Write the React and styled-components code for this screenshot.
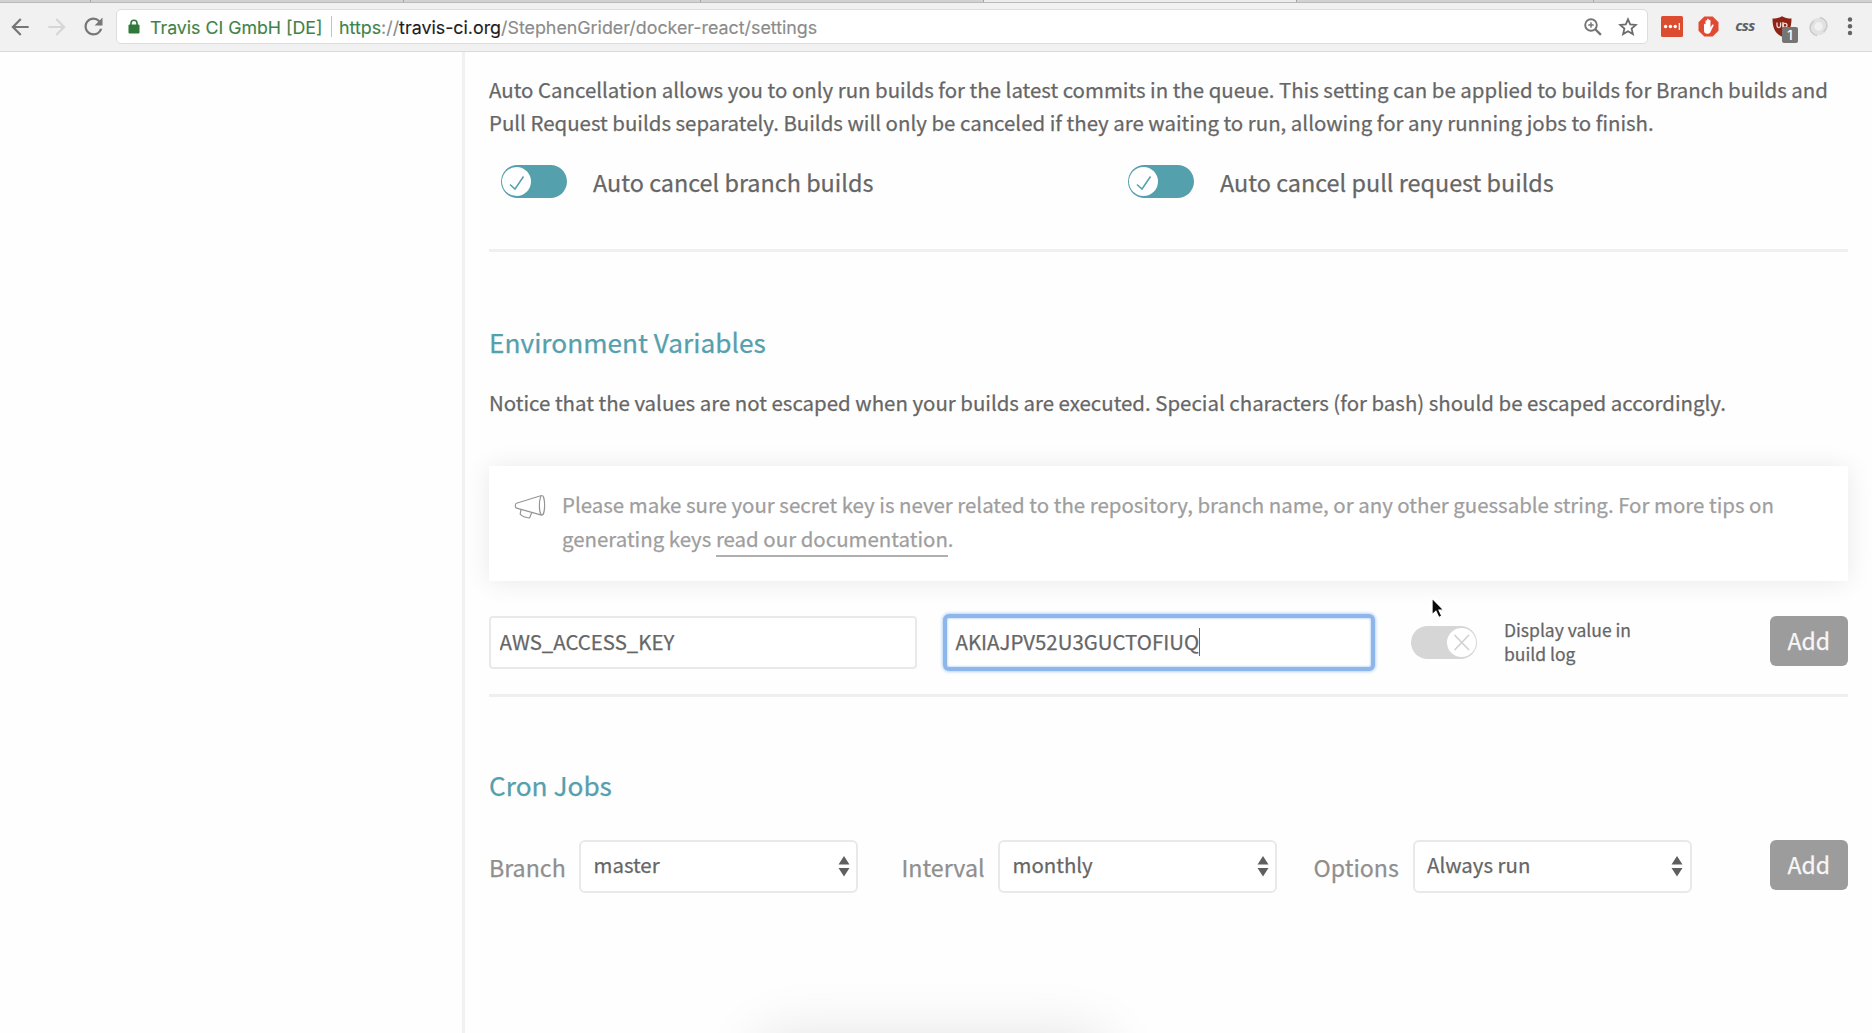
import React from 'react';
import styled, { createGlobalStyle, css } from 'styled-components';

const teal = '#55a0ad';
const textFont = '"Noto Sans CJK SC", "Open Sans", sans-serif';
const chromeFont = 'Inter, Roboto, sans-serif';

const Global = createGlobalStyle`
  * { box-sizing: border-box; }
  body { margin: 0; background: #fefefe; overflow: hidden; font-family: ${textFont}; color: #666; }
`;

const Window = styled.div`
  position: relative;
  display: flex;
  flex-direction: column;
  height: 1033px;
  width: 1872px;
  overflow: hidden;
`;

/* ---------- browser chrome ---------- */
const TabStrip = styled.div`
  display: flex;
  height: 3px;
  background: #d2d2d2;
  border-bottom: 1px solid #b9b9b9;
`;
const Tab = styled.div`
  width: ${p => p.$width}px;
  border-right: 1px solid #a5a5a5;
  background: ${p => (p.$active ? '#ececec' : 'transparent')};
`;
const Toolbar = styled.div`
  display: flex;
  align-items: center;
  height: 49px;
  padding: 0 0 1px 5px;
  background: #f1f1f1;
  border-bottom: 1px solid #dadada;
`;
const NavButton = styled.span`
  display: flex;
  flex: none;
  justify-content: center;
  width: 37px;
  margin-left: ${p => (p.$first ? -4 : 0)}px;
  color: ${p => (p.$disabled ? '#d6d6d6' : '#777')};
  &:nth-child(3) { margin-right: 4px; }
`;
const AddressBar = styled.div`
  display: flex;
  align-items: center;
  flex: none;
  width: 1532px;
  height: 35px;
  padding: 0 9px 0 11px;
  background: #fff;
  border: 1px solid #dcdcdc;
  border-radius: 5px;
  font: 17.75px/33px ${chromeFont};
  color: #8b8b8b;
  white-space: pre;
`;
const Secure = styled.span`
  margin-left: 10px;
  padding-top: 1px;
  color: #3f8347;
  -webkit-text-stroke: 0.15px currentColor;
`;
const Separator = styled.span`
  width: 1px;
  height: 21px;
  margin: 0 7px 0 8.5px;
  background: #c4c4c4;
`;
const Url = styled.span`
  flex: 1;
  padding-top: 1px;
  font-size: 17.83px;
  -webkit-text-stroke: 0.15px currentColor;
`;
const Scheme = styled.span`color: #3f8347;`;
const Host = styled.span`color: #1c1c1c;`;
const BarIcons = styled.span`
  display: flex;
  align-items: center;
  gap: 16px;
`;
const Extensions = styled.div`
  display: flex;
  align-items: center;
  flex: 1;
  margin-left: 13px;
`;
const Slot = styled.span`
  position: relative;
  display: flex;
  flex: none;
  justify-content: center;
  width: ${p => p.$width}px;
  height: 21px;
  svg { flex: none; }
`;
const CssMark = styled.span`
  font: italic 700 15px/19px "Open Sans", sans-serif;
  letter-spacing: -0.7px;
  color: #616161;
`;
const Badge = styled.span`
  position: absolute;
  left: 26px;
  top: 11px;
  width: 16px;
  height: 16px;
  border-radius: 2px;
  background: #757575;
  color: #fff;
  font: 500 13px/16px ${chromeFont};
  text-align: center;
`;

/* ---------- page ---------- */
const Page = styled.div`
  display: flex;
  flex: 1;
  -webkit-text-stroke: 0.25px currentColor;
`;
const Sidebar = styled.aside`
  width: 465px;
  border-right: 3px solid #f1f1f1;
`;
const Content = styled.main`
  flex: 1;
  padding: 21px 24px 0;
`;
const Paragraph = styled.p`
  margin: 0;
  font-size: 20.43px;
  line-height: 33px;
  white-space: nowrap;
`;
const Section = styled.section`
  padding-top: ${p => p.$top || 0}px;
  ${p => p.$height && css`
    height: ${p.$height}px;
    border-bottom: 3px solid #efefef;
  `}
`;
const Heading = styled.h2`
  margin: 0 0 ${p => p.$gap}px;
  font-size: 26.25px;
  font-weight: 400;
  line-height: 39px;
  color: ${teal};
`;
const SwitchRow = styled.div`
  display: grid;
  grid-template-columns: 627px 1fr;
  padding: 25px 0 0 11.5px;
`;
const SwitchItem = styled.div`
  display: flex;
  align-items: center;
  gap: 26.5px;
`;
const SwitchLabel = styled.span`
  padding-top: 2px;
  font-size: 23.4px;
  line-height: 33px;
`;
const Track = styled.span`
  display: flex;
  justify-content: ${p => (p.$on ? 'flex-start' : 'flex-end')};
  flex: none;
  width: 66px;
  height: 33px;
  padding: 2px 1.5px;
  border-radius: 17px;
  background: ${p => (p.$on ? teal : '#d6d6d6')};
`;
const Knob = styled.span`
  width: 29px;
  height: 29px;
  border-radius: 50%;
  background: #fff;
  svg { display: block; }
`;
const Notice = styled.div`
  display: flex;
  height: 115px;
  margin: 47px 0 35px;
  padding: 21px 25px;
  background: #fff;
  box-shadow: 0 1px 24px rgba(0, 0, 0, 0.085);
  color: #9e9e9e;
  font-size: 20.44px;
  line-height: 34px;
  white-space: nowrap;
`;
const NoticeIcon = styled.span`
  width: 48px;
  padding-top: 7px;
  svg { display: block; }
`;
const DocLink = styled.a`
  padding-bottom: 2px;
  border-bottom: 2px solid #b0b0b0;
`;
const FormRow = styled.div`
  display: flex;
  align-items: center;
  height: 53px;
`;
const fieldBase = css`
  width: 428px;
  height: 53px;
  padding: 0 0 3px 8.5px;
  border: 2px solid #e9e9e9;
  border-radius: 4px;
  background: #fff;
  color: #666;
  font: 20.42px/46px ${textFont};
  outline: none;
`;
const Field = styled.input`
  ${fieldBase}
  margin-right: 28px;
`;
const FocusedField = styled.div`
  ${fieldBase}
  display: flex;
  align-items: center;
  border-color: #8db6ec;
  box-shadow: 0 0 0 2px #8db6ec, 0 0 3px 3px #b9d4f6, inset 0 0 2px 1px #cfe1f8;
  margin-right: 38px;
`;
const Caret = styled.span`
  width: 1px;
  height: 28px;
  margin-top: 2px;
  background: #666;
`;
const LogLabel = styled.span`
  width: 160px;
  margin-left: 27px;
  padding-bottom: 2px;
  font-size: 17.5px;
  line-height: 23.5px;
`;
const AddButton = styled.button`
  width: 78.5px;
  height: 50px;
  margin-left: auto;
  padding: 0 0 3px;
  align-self: flex-start;
  border: 0;
  border-radius: 6px;
  background: #9c9c9c;
  color: #f7f7f7;
  font: 23px/46px ${textFont};
`;
const SelectLabel = styled.label`
  width: ${p => p.$width}px;
  padding-top: 1px;
  font-size: 23.2px;
  line-height: 34px;
  color: #8f8f8f;
`;
const SelectBox = styled.span`
  position: relative;
  display: flex;
  width: 279px;
  height: 53px;
  margin-right: ${p => p.$gap}px;
`;
const Select = styled.select`
  appearance: none;
  width: 100%;
  padding: 0 30px 4px 12.5px;
  border: 2px solid #e9e9e9;
  border-radius: 6px;
  background: #fff;
  color: #666;
  font: 20.42px/45px ${textFont};
`;
const Arrows = styled.svg`
  position: absolute;
  right: 8.5px;
  top: 15px;
`;
const Pointer = styled.svg`
  position: absolute;
  left: 1430px;
  top: 596px;
`;
const BottomGlow = styled.div`
  position: absolute;
  left: 768px;
  top: 1045px;
  width: 330px;
  height: 60px;
  border-radius: 10px;
  box-shadow: 0 0 60px 10px rgba(0, 0, 0, 0.11);
`;

const Glyph = ({ d, size = 26, flip }) => (
  <svg width={size} height={size} viewBox="0 0 24 24" fill="currentColor">
    <path d={d} transform={flip ? 'translate(24 0) scale(-1 1)' : undefined} />
  </svg>
);
const arrowPath = 'M20 11H7.83l5.59-5.59L12 4l-8 8 8 8 1.41-1.41L7.83 13H20v-2z';
const reloadPath = 'M17.65 6.35A7.958 7.958 0 0 0 12 4c-4.42 0-7.99 3.58-7.99 8s3.57 8 7.99 8c3.73 0 6.84-2.55 7.73-6h-2.08A5.99 5.99 0 0 1 12 18c-3.31 0-6-2.69-6-6s2.69-6 6-6c1.66 0 3.14.69 4.22 1.78L13 11h7V4l-2.35 2.35z';

const Switch = ({ on }) => (
  <Track $on={on}>
    <Knob>
      <svg width="29" height="29" viewBox="0 0 29 29" fill="none" strokeWidth="1.5" stroke={on ? teal : '#cfcfcf'}>
        <path d={on ? 'M8 17.5l5 4.5 8.5-12.5' : 'M7.5 7l14.5 15M22 7L7.500 22'} />
      </svg>
    </Knob>
  </Track>
);

const Dropdown = ({ value, gap }) => (
  <SelectBox $gap={gap}>
    <Select defaultValue={value}><option>{value}</option></Select>
    <Arrows width="12" height="22" viewBox="0 0 12 22" fill="#5f5f5f">
      <path d="M6 1l5.500 8.500H.5zM6 21.500L.5 13h11z" />
    </Arrows>
  </SelectBox>
);

const tabs = [91, 313, 297, 283, 313, 297];

export default function App() {
  return (
    <Window>
      <Global />
      <TabStrip>
        {tabs.map((w, i) => <Tab key={i} $width={w} $active={i === 4} />)}
      </TabStrip>
      <Toolbar>
        <NavButton $first><Glyph d={arrowPath} /></NavButton>
        <NavButton $disabled><Glyph d={arrowPath} flip /></NavButton>
        <NavButton><Glyph d={reloadPath} size={27} /></NavButton>
        <AddressBar>
          <svg width="12" height="15" viewBox="0 0 12 15">
            <path d="M3 7V4.200a3 3 0 0 1 6 0V7" fill="none" stroke="#2f7a3a" strokeWidth="1.600" />
            <rect x="0.500" y="5.500" width="11" height="9" rx="1" fill="#2f7a3a" />
          </svg>
          <Secure>Travis CI GmbH [DE]</Secure>
          <Separator />
          <Url><Scheme>https</Scheme>://<Host>travis-ci.org</Host>/StephenGrider/docker-react/settings</Url>
          <BarIcons>
            <svg width="18" height="18" viewBox="0 0 18 18" fill="none" stroke="#737373" strokeWidth="1.900">
              <circle cx="7" cy="7" r="5.800" />
              <path d="M11.300 11.300l5.600 5.600" strokeWidth="2.300" />
              <path d="M4.300 7h5.400M7 4.300v5.400" strokeWidth="1.400" />
            </svg>
            <svg width="20" height="19" viewBox="0 0 20 19" fill="none" stroke="#6c6c6c" strokeWidth="1.800">
              <path d="M10 2.300l2.200 5.100 5.600.5-4.200 3.700 1.300 5.500-4.900-2.900-4.900 2.900 1.300-5.500L2.200 7.900l5.600-.5z" />
            </svg>
          </BarIcons>
        </AddressBar>
        <Extensions>
          <Slot $width={22}>
            <svg width="22" height="21" viewBox="0 0 22 21">
              <rect width="22" height="21" rx="1.500" fill="#db4c30" />
              <circle cx="4.600" cy="10.500" r="1.700" fill="#fff" />
              <circle cx="9.400" cy="10.500" r="1.700" fill="#fff" />
              <circle cx="14.200" cy="10.500" r="1.700" fill="#fff" />
              <path d="M18.300 7v7" stroke="#fff" strokeWidth="1.200" />
            </svg>
          </Slot>
          <Slot $width={51}>
            <svg width="21" height="21" viewBox="0 0 21 21">
              <path d="M6.300.5h8.400l5.800 5.800v8.400l-5.800 5.800H6.300L.5 14.700V6.300z" fill="#e04a32" />
              <path d="M6 8.500c0-1 1.500-1 1.500 0V5c0-1 1.600-1 1.600 0V3.600c0-1 1.700-1 1.700 0v1c0-1 1.700-1 1.700 0v6.600l1.600-2.300c.7-.8 1.900-.2 1.500.7l-3 6.200c-.6 1.400-1.600 2-3.300 2-2 0-3.300-1-3.300-3.200z" fill="#fff" />
            </svg>
          </Slot>
          <Slot $width={22}><CssMark>css</CssMark></Slot>
          <Slot $width={52}>
            <svg width="20" height="21" viewBox="0 0 20 21">
              <path d="M10 .3c2.600 1.500 5.800 2.300 9.500 2.300C19.500 12 17 17.500 10 20.700 3 17.500.5 12 .5 2.600 4.200 2.600 7.400 1.800 10 .3z" fill="#8e2415" />
              <path d="M5 6.500v3.300a1.800 1.800 0 0 0 3.600 0V6.500M11 6v5.500" fill="none" stroke="#f3dcd8" strokeWidth="1.300" />
              <circle cx="13" cy="9.300" r="2" fill="none" stroke="#f3dcd8" strokeWidth="1.300" />
            </svg>
            <Badge>1</Badge>
          </Slot>
          <Slot $width={20}>
            <svg width="21" height="21" viewBox="0 0 21 21" fill="none">
              <circle cx="10.500" cy="10.500" r="6.500" stroke="#e2e2e2" strokeWidth="4.500" />
              <path d="M12 1.500c5 1 8 5 6.500 10.500l-3 4M9 19.500C4 18.500 1 14.500 2.500 9l3-4" stroke="#c9c9c9" strokeWidth="1.400" />
            </svg>
          </Slot>
          <Slot $width={43}>
            <svg width="6" height="20" viewBox="0 0 6 20" fill="#636363">
              <circle cx="3" cy="3.500" r="2.200" /><circle cx="3" cy="10.200" r="2.200" /><circle cx="3" cy="17" r="2.200" />
            </svg>
          </Slot>
        </Extensions>
      </Toolbar>

      <Page>
        <Sidebar />
        <Content>
          <Section $height={179}>
            <Paragraph>
              Auto Cancellation allows you to only run builds for the latest commits in the queue. This setting can be applied to builds for Branch builds and
              <br />
              Pull Request builds separately. Builds will only be canceled if they are waiting to run, allowing for any running jobs to finish.
            </Paragraph>
            <SwitchRow>
              <SwitchItem><Switch on /><SwitchLabel>Auto cancel branch builds</SwitchLabel></SwitchItem>
              <SwitchItem><Switch on /><SwitchLabel>Auto cancel pull request builds</SwitchLabel></SwitchItem>
            </SwitchRow>
          </Section>

          <Section $top={71} $height={445}>
            <Heading $gap={24}>Environment Variables</Heading>
            <Paragraph>
              Notice that the values are not escaped when your builds are executed. Special characters (for bash) should be escaped accordingly.
            </Paragraph>
            <Notice>
              <NoticeIcon>
                <svg width="32" height="27" viewBox="0 0 32 27" fill="none" stroke="#959595" strokeWidth="1.200" strokeLinejoin="round">
                  <path d="M27.500 1.500L2.500 9.300c-1 .3-1.200 1-1.200 2.200s.3 2.300 1.300 2.600l25 7" />
                  <ellipse cx="28" cy="11.300" rx="2.600" ry="9.800" />
                  <path d="M7 15.500l-.8 4.700c1.500 1.700 5.500 3.500 9.300 3.800l2.300-5.400" />
                </svg>
              </NoticeIcon>
              <div>
                Please make sure your secret key is never related to the repository, branch name, or any other guessable string. For more tips on
                <br />
                generating keys <DocLink>read our documentation</DocLink>.
              </div>
            </Notice>
            <FormRow>
              <Field defaultValue="AWS_ACCESS_KEY" />
              <FocusedField>AKIAJPV52U3GUCTOFIUQ<Caret /></FocusedField>
              <Switch />
              <LogLabel>Display value in<br />build log</LogLabel>
              <AddButton>Add</AddButton>
            </FormRow>
          </Section>

          <Section $top={69}>
            <Heading $gap={35}>Cron Jobs</Heading>
            <FormRow>
              <SelectLabel $width={90}>Branch</SelectLabel>
              <Dropdown value="master" gap={43.5} />
              <SelectLabel $width={96.5}>Interval</SelectLabel>
              <Dropdown value="monthly" gap={36.5} />
              <SelectLabel $width={99}>Options</SelectLabel>
              <Dropdown value="Always run" gap={0} />
              <AddButton>Add</AddButton>
            </FormRow>
          </Section>
        </Content>
      </Page>

      <Pointer width="18" height="26" viewBox="0 0 18 26">
        <path d="M2 2v17l3.900-3.600 2.900 6.100 3.100-1.400-2.800-5.900h5z" fill="#0a0a0a" stroke="#fff" strokeWidth="1.300" />
      </Pointer>
      <BottomGlow />
    </Window>
  );
}
